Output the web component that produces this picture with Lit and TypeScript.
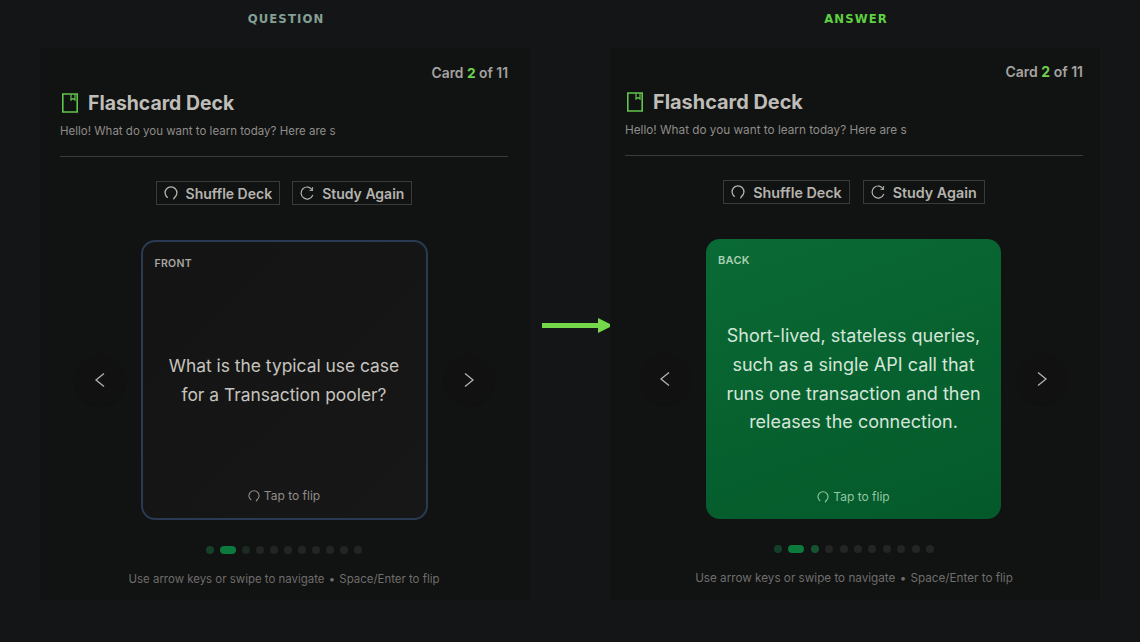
import { LitElement, css, html, svg } from 'lit';
import { customElement, property } from 'lit/decorators.js';
import { classMap } from 'lit/directives/class-map.js';

const bookIcon = html`<svg class="book" width="18" height="20" viewBox="0 0 18 20" fill="none" stroke="currentColor" stroke-width="1.6">
  <path d="M2.8 1h14.4v18H2.8z" />
  <path d="M11 1v6l2-1.4 2 1.4V1" stroke-width="1.2" />
</svg>`;

// open ring, ends curl in at the bottom
const loopPath = svg`<path d="M3.4 11.4A5.9 5.9 0 1 1 10.6 11.4" /><path d="M10.6 11.4l-.9 1.4" />`;

const loopIcon = (size: number) => html`<svg width=${size} height=${size} viewBox="0 0 14 14" fill="none" stroke="currentColor" stroke-width="1.3" stroke-linecap="round">
  ${loopPath}
</svg>`;

const againIcon = html`<svg width="14" height="14" viewBox="0 0 14 14" fill="none" stroke="currentColor" stroke-width="1.2" stroke-linecap="round">
  <path d="M12.4 4.2A6 6 0 1 0 12.6 9.4" />
  <path d="M12.6 1.4v3h-2.8" stroke-width="0.9" />
</svg>`;

@customElement('deck-panel')
export class DeckPanel extends LitElement {
  @property({ type: Boolean }) back = false;

  @property({ type: String }) side = 'FRONT';

  @property({ type: Array }) lines: string[] = [];

  static styles = css`
    :host {
      display: block;
      width: 490px;
      height: 552px;
      background: #111212;
      box-sizing: border-box;
      padding: 16px 22px 0 20px;
      font-family: Inter, 'Noto Sans', sans-serif;
      color: #bdbbb6;
    }

    :host([back]) {
      padding: 15px 17px 0 15px;
    }

    .count {
      text-align: right;
      font-size: 13.8px;
      line-height: 18px;
      font-weight: 600;
      color: #a5a3a0;
    }

    :host([back]) .count {
      font-size: 14px;
    }

    .count b {
      color: #6fcf4f;
      font-weight: 700;
    }

    .title {
      display: flex;
      align-items: center;
      gap: 10px;
      margin-top: 9px;
      height: 24px;
      font-size: 19.4px;
      font-weight: 700;
      color: #bfbdb8;
    }

    :host([back]) .title {
      font-size: 19.9px;
    }

    .book {
      color: #62c44c;
      flex: none;
    }

    .sub {
      margin-top: 8px;
      font-size: 11.5px;
      line-height: 16px;
      color: #8f8d89;
    }

    :host([back]) .sub {
      font-size: 11.75px;
    }

    hr {
      margin: 17px 0 0;
      border: none;
      height: 1px;
      background: #3a3a3a;
    }

    .tools {
      display: flex;
      justify-content: center;
      gap: 12px;
      margin-top: 24px;
    }

    :host([back]) .tools {
      gap: 13px;
    }

    .tool {
      display: flex;
      align-items: center;
      gap: 8px;
      height: 24px;
      box-sizing: border-box;
      padding: 0 7px;
      background: transparent;
      border: 1px solid #3a3a3a;
      color: #b5b3ae;
      font: 600 14px Inter, sans-serif;
    }

    :host([back]) .tool {
      font-size: 14.3px;
    }

    .stage {
      display: flex;
      justify-content: center;
      align-items: center;
      gap: 16px;
      margin-top: 35px;
    }

    :host([back]) .stage {
      margin-left: -1px;
    }

    .nav {
      width: 50px;
      height: 50px;
      flex: none;
      display: flex;
      align-items: center;
      justify-content: center;
      border-radius: 50%;
      background: #111111;
      box-shadow: 0 1px 2px rgba(0, 0, 0, 0.1);
      color: #b5b3ae;
    }

    .card {
      box-sizing: border-box;
      width: 287px;
      height: 280px;
      border-radius: 14px;
      display: flex;
      flex-direction: column;
      padding: 15px 12px 14px;
    }

    .card.front {
      background: linear-gradient(135deg, #141414, #171717);
      border: 2px solid #2a3a52;
    }

    .card.rear {
      width: 295px;
      background: linear-gradient(160deg, #0a6a35, #04592a);
      padding: 15px 12px 14px;
      color: #d8e8dc;
    }

    .tag {
      font-size: 10.5px;
      line-height: 13px;
      font-weight: 600;
      letter-spacing: 0.3px;
      color: #a8a6a1;
    }

    .rear .tag {
      font-size: 11px;
      color: #a9d0b3;
    }

    .face {
      flex: 1;
      display: flex;
      flex-direction: column;
      align-items: center;
      justify-content: center;
      padding-top: 2px;
      font-size: 17.4px;
      line-height: 29px;
      text-align: center;
      color: #c6c4bf;
    }

    .rear .face {
      font-size: 18px;
      line-height: 28.7px;
      padding-top: 3px;
      color: #d5e6d9;
    }

    .flip {
      display: flex;
      justify-content: center;
      align-items: center;
      gap: 4px;
      font-size: 12px;
      line-height: 16px;
      color: #8f8d89;
    }

    .rear .flip {
      color: #93c7a2;
    }

    .dots {
      display: flex;
      justify-content: center;
      gap: 6px;
      margin-top: 26px;
    }

    :host([back]) .dots {
      gap: 6.4px;
    }

    .dot {
      width: 8px;
      height: 8px;
      border-radius: 4px;
      background: #242424;
    }

    .dot.done {
      background: #14402a;
    }

    .dot.now {
      width: 16px;
      background: #0b7a3c;
    }

    .dot.next {
      background: #1c2a22;
    }

    :host([back]) .dot.next {
      background: #14552f;
    }

    .hint {
      margin-top: 17px;
      text-align: center;
      font-size: 11.45px;
      line-height: 16px;
      color: #6f6e6b;
    }

    :host([back]) .hint {
      font-size: 11.7px;
    }

    .hint span {
      margin: 0 1px;
    }
  `;

  private dotClass(i: number) {
    return classMap({ dot: true, done: i === 0, now: i === 1, next: i === 2 });
  }

  render() {
    return html`
      <div class="count">Card <b>2</b> of 11</div>
      <div class="title">${bookIcon}<span>Flashcard Deck</span></div>
      <div class="sub">Hello! What do you want to learn today? Here are s</div>
      <hr />
      <div class="tools">
        <button class="tool">${loopIcon(14)}Shuffle Deck</button>
        <button class="tool">${againIcon}Study Again</button>
      </div>
      <div class="stage">
        <div class="nav">
          <svg width="16" height="16" viewBox="0 0 16 16" fill="none" stroke="currentColor" stroke-width="1.3"><path d="M12 1.5L4 8l8 6.5" /></svg>
        </div>
        <div class="card ${this.back ? 'rear' : 'front'}">
          <div class="tag">${this.side}</div>
          <div class="face">${this.lines.map(l => html`<div>${l}</div>`)}</div>
          <div class="flip">${loopIcon(12)}Tap to flip</div>
        </div>
        <div class="nav">
          <svg width="16" height="16" viewBox="0 0 16 16" fill="none" stroke="currentColor" stroke-width="1.3"><path d="M4 1.5L12 8l-8 6.5" /></svg>
        </div>
      </div>
      <div class="dots">
        ${Array.from({ length: 11 }, (_, i) => html`<span class=${this.dotClass(i)}></span>`)}
      </div>
      <div class="hint">Use arrow keys or swipe to navigate <span>•</span> Space/Enter to flip</div>
    `;
  }
}

@customElement('app-root')
export class AppRoot extends LitElement {
  static styles = css`
    :host {
      display: block;
      width: 1140px;
      height: 642px;
      background: #131517;
      overflow: hidden;
    }

    .heads {
      display: flex;
      padding: 12px 0 0 41px;
      height: 48px;
      box-sizing: border-box;
      font: 700 11.7px/15px 'DejaVu Sans', sans-serif;
      letter-spacing: 1.1px;
    }

    .heads div {
      width: 490px;
      text-align: center;
    }

    .heads .q {
      color: #84a094;
    }

    .heads .a {
      margin-left: 80px;
      color: #5fd13f;
    }

    .row {
      display: flex;
      padding-left: 40px;
    }

    .arrow {
      width: 80px;
      flex: none;
      display: flex;
      justify-content: center;
      align-items: center;
      padding: 2px 0 0 16px;
      box-sizing: border-box;
    }

    .arrow svg {
      flex: none;
    }
  `;

  render() {
    return html`
      <div class="heads">
        <div class="q">QUESTION</div>
        <div class="a">ANSWER</div>
      </div>
      <div class="row">
        <deck-panel
          side="FRONT"
          .lines=${['What is the typical use case', 'for a Transaction pooler?']}
        ></deck-panel>
        <div class="arrow">
          <svg width="72" height="16" viewBox="0 0 72 16">
            <path d="M0 6h57v5H0z" fill="#75d84b" />
            <path d="M56 1l15 7.5L56 16z" fill="#75d84b" />
          </svg>
        </div>
        <deck-panel
          back
          side="BACK"
          .lines=${[
            'Short-lived, stateless queries,',
            'such as a single API call that',
            'runs one transaction and then',
            'releases the connection.',
          ]}
        ></deck-panel>
      </div>
    `;
  }
}
